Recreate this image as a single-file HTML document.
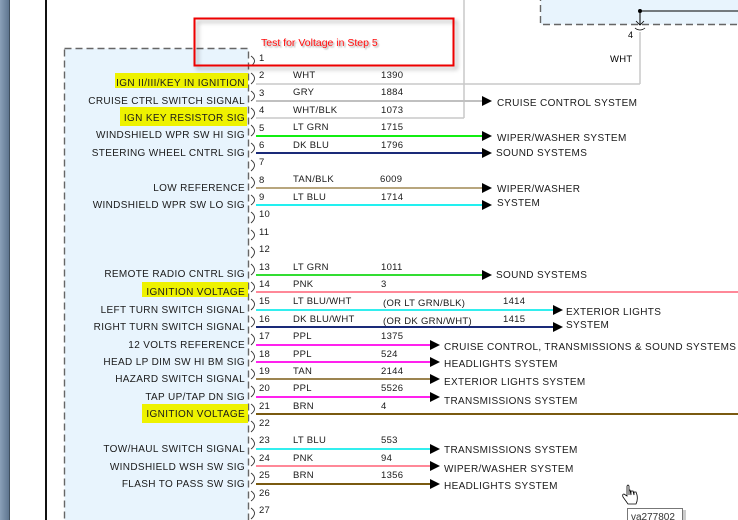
<!DOCTYPE html>
<html><head><meta charset="utf-8"><style>
html,body{margin:0;padding:0;background:#fff;}
svg{display:block;font-family:"Liberation Sans",Arial,sans-serif;}
</style></head><body>
<svg width="738" height="520" viewBox="0 0 738 520" xmlns="http://www.w3.org/2000/svg">
<defs>
<linearGradient id="g" x1="0" x2="1"><stop offset="0" stop-color="#8aa0b8"/><stop offset="1" stop-color="#5f7690"/></linearGradient>
<filter id="sh" x="-10%" y="-10%" width="130%" height="140%"><feDropShadow dx="3" dy="3" stdDeviation="2" flood-color="#000" flood-opacity="0.3"/></filter>
<filter id="ts"><feDropShadow dx="1.5" dy="1.5" stdDeviation="0.8" flood-color="#000" flood-opacity="0.35"/></filter>
</defs>
<rect x="0" y="0" width="9" height="520" fill="url(#g)"/>
<rect x="9" y="0" width="1" height="520" fill="#40505f"/>
<rect x="45" y="0" width="2" height="520" fill="#111"/>
<rect x="64.5" y="48.5" width="184" height="480" fill="#e8f4fd" stroke="#666" stroke-width="1.4" stroke-dasharray="7,4"/>
<rect x="540.5" y="-5" width="210" height="29.5" fill="#e8f4fd" stroke="#666" stroke-width="1.4" stroke-dasharray="7,4"/>
<line x1="640" y1="11" x2="738" y2="11" stroke="#000" stroke-width="1"/>
<circle cx="640" cy="11" r="2" fill="#000"/>
<line x1="640" y1="11" x2="640" y2="25" stroke="#000"/>
<path d="M636 21 L640 25 L644 21" fill="none" stroke="#000" stroke-width="0.8"/>
<path d="M635 28 Q640 32 645 28" fill="none" stroke="#000" stroke-width="0.8"/>
<text x="628" y="38" font-size="9">4</text>
<text x="610" y="62" font-size="9.5" letter-spacing="0.3">WHT</text>
<line x1="640" y1="32" x2="640" y2="84" stroke="#c8c8c8" stroke-width="1.5"/>
<line x1="464" y1="0" x2="464" y2="118" stroke="#c8c8c8" stroke-width="1.5"/>

<rect x="115" y="73" width="133" height="15" fill="#eef200"/>
<rect x="120" y="107" width="127" height="19" fill="#eef200"/>
<rect x="142" y="282" width="106" height="15" fill="#eef200"/>
<rect x="142" y="404" width="106" height="19" fill="#eef200"/>

<g font-size="10" fill="#1a1a1a" text-anchor="end" letter-spacing="0.35">
<text x="245" y="86">IGN II/III/KEY IN IGNITION</text>
<text x="245" y="104">CRUISE CTRL SWITCH SIGNAL</text>
<text x="245" y="121">IGN KEY RESISTOR SIG</text>
<text x="245" y="138">WINDSHIELD WPR SW HI SIG</text>
<text x="245" y="156">STEERING WHEEL CNTRL SIG</text>
<text x="245" y="191">LOW REFERENCE</text>
<text x="245" y="208">WINDSHIELD WPR SW LO SIG</text>
<text x="245" y="277">REMOTE RADIO CNTRL SIG</text>
<text x="245" y="295">IGNITION VOLTAGE</text>
<text x="245" y="313">LEFT TURN SWITCH SIGNAL</text>
<text x="245" y="330">RIGHT TURN SWITCH SIGNAL</text>
<text x="245" y="348">12 VOLTS REFERENCE</text>
<text x="245" y="365">HEAD LP DIM SW HI BM SIG</text>
<text x="245" y="382">HAZARD SWITCH SIGNAL</text>
<text x="245" y="400">TAP UP/TAP DN SIG</text>
<text x="245" y="417">IGNITION VOLTAGE</text>
<text x="245" y="452">TOW/HAUL SWITCH SIGNAL</text>
<text x="245" y="470">WINDSHIELD WSH SW SIG</text>
<text x="245" y="487">FLASH TO PASS SW SIG</text>
</g>

<g fill="none" stroke="#333" stroke-width="0.9">
<path d="M251 56 Q258 61 251 66"/><path d="M251 73 Q258 78 251 84"/><path d="M251 91 Q258 96 251 101"/>
<path d="M251 108 Q258 113 251 119"/><path d="M251 125 Q258 131 251 136"/><path d="M251 143 Q258 148 251 153"/>
<path d="M251 160 Q258 165 251 171"/><path d="M251 177 Q258 183 251 188"/><path d="M251 195 Q258 200 251 205"/>
<path d="M251 212 Q258 217 251 223"/><path d="M251 230 Q258 235 251 240"/><path d="M251 247 Q258 252 251 258"/>
<path d="M251 264 Q258 270 251 275"/><path d="M251 282 Q258 287 251 292"/><path d="M251 299 Q258 304 251 310"/>
<path d="M251 317 Q258 322 251 327"/><path d="M251 334 Q258 339 251 345"/><path d="M251 351 Q258 357 251 362"/>
<path d="M251 369 Q258 374 251 379"/><path d="M251 386 Q258 391 251 397"/><path d="M251 404 Q258 409 251 414"/>
<path d="M251 421 Q258 426 251 432"/><path d="M251 438 Q258 444 251 449"/><path d="M251 456 Q258 461 251 466"/>
<path d="M251 473 Q258 478 251 484"/><path d="M251 491 Q258 496 251 501"/><path d="M251 508 Q258 513 251 519"/>
</g>

<g font-size="9.5" fill="#1a1a1a" letter-spacing="0.2">
<text x="259" y="61">1</text><text x="259" y="78">2</text><text x="259" y="96">3</text><text x="259" y="113">4</text>
<text x="259" y="131">5</text><text x="259" y="148">6</text><text x="259" y="165">7</text><text x="259" y="183">8</text>
<text x="259" y="200">9</text><text x="259" y="217">10</text><text x="259" y="235">11</text><text x="259" y="252">12</text>
<text x="259" y="270">13</text><text x="259" y="287">14</text><text x="259" y="304">15</text><text x="259" y="322">16</text>
<text x="259" y="339">17</text><text x="259" y="357">18</text><text x="259" y="374">19</text><text x="259" y="391">20</text>
<text x="259" y="409">21</text><text x="259" y="426">22</text><text x="259" y="443">23</text><text x="259" y="461">24</text>
<text x="259" y="478">25</text><text x="259" y="496">26</text><text x="259" y="513">27</text>
</g>

<g stroke-width="2" fill="none">
<line x1="256" y1="84" x2="640" y2="84" stroke="#c8c8c8" stroke-width="1.5"/>
<line x1="256" y1="101" x2="482" y2="101" stroke="#c0c0c0"/>
<line x1="256" y1="118" x2="464" y2="118" stroke="#c8c8c8" stroke-width="1.5"/>
<line x1="256" y1="136" x2="482" y2="136" stroke="#11ee11"/>
<line x1="256" y1="153" x2="482" y2="153" stroke="#1a2a78"/>
<line x1="256" y1="188" x2="482" y2="188" stroke="#b8a67e"/>
<line x1="256" y1="205" x2="482" y2="205" stroke="#22f0f0"/>
<line x1="256" y1="275" x2="482" y2="275" stroke="#33dd33"/>
<line x1="256" y1="292" x2="738" y2="292" stroke="#ff8898"/>
<line x1="256" y1="310" x2="553" y2="310" stroke="#33eeee"/>
<line x1="256" y1="327" x2="553" y2="327" stroke="#1a2a78"/>
<line x1="256" y1="345" x2="430" y2="345" stroke="#ff22ee"/>
<line x1="256" y1="362" x2="430" y2="362" stroke="#ff22ee"/>
<line x1="256" y1="379" x2="430" y2="379" stroke="#9c8450"/>
<line x1="256" y1="397" x2="430" y2="397" stroke="#ff22ee"/>
<line x1="256" y1="414" x2="738" y2="414" stroke="#7a5a10"/>
<line x1="256" y1="449" x2="430" y2="449" stroke="#33eeee"/>
<line x1="256" y1="466" x2="430" y2="466" stroke="#ff8898"/>
<line x1="256" y1="484" x2="430" y2="484" stroke="#7a5a10"/>
</g>

<g fill="#000">
<path d="M482 96 L492 101 L482 106Z"/>
<path d="M482 131 L492 136 L482 141Z"/>
<path d="M482 148 L492 153 L482 158Z"/>
<path d="M482 183 L492 188 L482 193Z"/>
<path d="M482 200 L492 205 L482 210Z"/>
<path d="M482 270 L492 275 L482 280Z"/>
<path d="M553 305 L563 310 L553 315Z"/>
<path d="M553 322 L563 327 L553 332Z"/>
<path d="M430 340 L440 345 L430 350Z"/>
<path d="M430 357 L440 362 L430 367Z"/>
<path d="M430 374 L440 379 L430 384Z"/>
<path d="M430 392 L440 397 L430 402Z"/>
<path d="M430 444 L440 449 L430 454Z"/>
<path d="M430 461 L440 466 L430 471Z"/>
<path d="M430 479 L440 484 L430 489Z"/>
</g>

<g font-size="9.5" fill="#1a1a1a" letter-spacing="0.3">
<text x="293" y="78">WHT</text><text x="381" y="78">1390</text>
<text x="293" y="95">GRY</text><text x="381" y="95">1884</text>
<text x="293" y="113">WHT/BLK</text><text x="381" y="113">1073</text>
<text x="293" y="130">LT GRN</text><text x="381" y="130">1715</text>
<text x="293" y="148">DK BLU</text><text x="381" y="148">1796</text>
<text x="293" y="182">TAN/BLK</text><text x="380" y="182">6009</text>
<text x="293" y="200">LT BLU</text><text x="381" y="200">1714</text>
<text x="293" y="270">LT GRN</text><text x="381" y="270">1011</text>
<text x="293" y="287">PNK</text><text x="381" y="287">3</text>
<text x="293" y="304">LT BLU/WHT</text><text x="383" y="306">(OR LT GRN/BLK)</text><text x="503" y="304">1414</text>
<text x="293" y="322">DK BLU/WHT</text><text x="383" y="324">(OR DK GRN/WHT)</text><text x="503" y="322">1415</text>
<text x="293" y="339">PPL</text><text x="381" y="339">1375</text>
<text x="293" y="357">PPL</text><text x="381" y="357">524</text>
<text x="293" y="374">TAN</text><text x="381" y="374">2144</text>
<text x="293" y="391">PPL</text><text x="381" y="391">5526</text>
<text x="293" y="409">BRN</text><text x="381" y="409">4</text>
<text x="293" y="443">LT BLU</text><text x="381" y="443">553</text>
<text x="293" y="461">PNK</text><text x="381" y="461">94</text>
<text x="293" y="478">BRN</text><text x="381" y="478">1356</text>
</g>

<g font-size="10" fill="#1a1a1a" letter-spacing="0.35">
<text x="497" y="106">CRUISE CONTROL SYSTEM</text>
<text x="497" y="141">WIPER/WASHER SYSTEM</text>
<text x="496" y="156">SOUND SYSTEMS</text>
<text x="497" y="192">WIPER/WASHER</text>
<text x="497" y="206">SYSTEM</text>
<text x="496" y="278">SOUND SYSTEMS</text>
<text x="566" y="315">EXTERIOR LIGHTS</text>
<text x="566" y="328">SYSTEM</text>
<text x="444" y="350">CRUISE CONTROL, TRANSMISSIONS &amp; SOUND SYSTEMS</text>
<text x="444" y="367">HEADLIGHTS SYSTEM</text>
<text x="444" y="385">EXTERIOR LIGHTS SYSTEM</text>
<text x="444" y="404">TRANSMISSIONS SYSTEM</text>
<text x="444" y="453">TRANSMISSIONS SYSTEM</text>
<text x="444" y="472">WIPER/WASHER SYSTEM</text>
<text x="444" y="489">HEADLIGHTS SYSTEM</text>
</g>

<rect x="194.5" y="18.5" width="259" height="47" fill="none" stroke="#ee0000" stroke-width="2" filter="url(#sh)"/>
<text x="261" y="46" font-size="10.5" fill="#ff1010" filter="url(#ts)">Test for Voltage in Step 5</text>

<path d="M627 486 L627 496 L624 494 Q622 494 623 497 L628 504 L636 504 Q638 500 637 495 L636 492 L634 492 L634 495 L633 491 L631 491 L631 495 L630 490 L629 490 L629 495 L629 486 Q628 484 627 486Z" fill="#fff" stroke="#000" stroke-width="0.8"/>
<rect x="627.5" y="508.5" width="55" height="14" fill="#fff" stroke="#777"/>
<rect x="683" y="510" width="3" height="10" fill="#ccc"/>
<text x="631" y="520" font-size="10" fill="#333">va277802</text>
</svg>
</body></html>
